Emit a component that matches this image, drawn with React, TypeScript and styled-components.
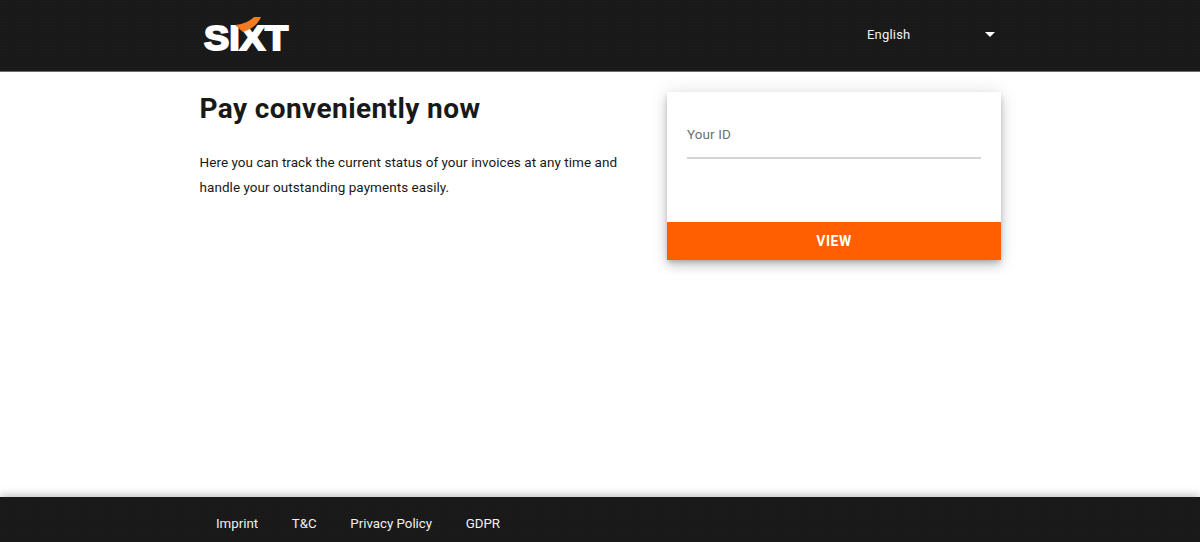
import React from "react";
import styled, { createGlobalStyle } from "styled-components";

const Global = createGlobalStyle`
  html, body { margin: 0; padding: 0; height: 100%; background: #fff; }
  body { font-family: Roboto, "Liberation Sans", sans-serif; color: #191919; }
  #root { height: 100%; }
`;

const Page = styled.div`
  height: 542px;
  display: flex;
  flex-direction: column;
  overflow: hidden;
`;

const Header = styled.header`
  height: 71px;
  flex: none;
  background-color: #191919;
  background-image: radial-gradient(rgba(255, 255, 255, 0.018) 0.6px, transparent 0.8px);
  background-size: 3px 3px;
  border-bottom: 1px solid #6b6b6b;
`;

const HeaderInner = styled.div`
  width: 800px;
  height: 100%;
  margin: 0 auto;
  display: flex;
  align-items: center;
  justify-content: space-between;
`;

const LogoSvg = styled.svg`
  display: block;
  width: 90px;
  height: 40px;
  margin: 0 0 3px 2px;
  overflow: visible;
`;

const LogoWord = styled.text`
  font-family: "Liberation Sans", sans-serif;
  font-weight: 700;
  font-size: 35px;
  fill: #fff;
  stroke: #fff;
  stroke-width: 2px;
`;

const LanguageSelect = styled.div`
  width: 128px;
  margin: 0 5px 2px 0;
  display: flex;
  align-items: center;
  justify-content: space-between;
  color: #f2f2f2;
  font-size: 13px;
  letter-spacing: 0.2px;
  line-height: 16px;
`;

const Caret = styled.span`
  width: 0;
  height: 0;
  border-left: 5px solid transparent;
  border-right: 5px solid transparent;
  border-top: 5px solid #fff;
`;

const Main = styled.main`
  flex: 1;
  width: 800px;
  margin: 0 auto;
  display: flex;
  justify-content: space-between;
  align-items: flex-start;
`;

const Intro = styled.section`
  width: 430px;
  margin-left: -0.5px;
`;

const Title = styled.h1`
  margin: 20px 0 0;
  font-size: 28px;
  line-height: 34px;
  font-weight: 700;
  letter-spacing: 0.4px;
  color: #191919;
`;

const Lead = styled.p`
  margin: 24px 0 0;
  font-size: 13.5px;
  line-height: 25px;
  letter-spacing: 0.05px;
  color: #191919;
`;

const Card = styled.form`
  width: 334px;
  height: 168px;
  margin: 20px -1px 0 0;
  display: flex;
  flex-direction: column;
  background: #fff;
  box-shadow: 0 3px 5px -1px rgba(0, 0, 0, 0.2), 0 6px 10px 0 rgba(0, 0, 0, 0.14), 0 1px 18px 0 rgba(0, 0, 0, 0.12);
`;

const Field = styled.div`
  flex: 1;
  padding: 0 20px;
`;

const FieldLabel = styled.div`
  height: 67px;
  box-sizing: border-box;
  padding-top: 34px;
  font-size: 13.5px;
  line-height: 17px;
  letter-spacing: 0.1px;
  color: #707070;
  border-bottom: 2px solid #d4d4d4;
`;

const ViewButton = styled.button`
  height: 38px;
  flex: none;
  border: 0;
  padding: 0;
  background: #ff5f00;
  color: #fff;
  font-family: inherit;
  font-size: 14px;
  font-weight: 700;
  letter-spacing: 0.5px;
`;

const Footer = styled.footer`
  height: 45px;
  flex: none;
  background-color: #191919;
  background-image: radial-gradient(rgba(255, 255, 255, 0.016) 0.6px, transparent 0.8px);
  background-size: 3px 3px;
  box-shadow: 0 -2px 8px rgba(0, 0, 0, 0.25);
`;

const FooterNav = styled.nav`
  width: 800px;
  height: 100%;
  margin: 0 auto;
  padding: 8px 0 0 16px;
  box-sizing: border-box;
  display: flex;
  align-items: center;
  gap: 33.6px;
`;

const FooterLink = styled.a`
  color: #f0f0f0;
  font-size: 13.3px;
  line-height: 17px;
`;

export default function App() {
  return (
    <Page>
      <Global />
      <Header>
        <HeaderInner>
          <LogoSvg viewBox="0 0 90 40" role="img" aria-label="SIXT">
            <LogoWord x="2" y="36" textLength="84" lengthAdjust="spacingAndGlyphs">SIXT</LogoWord>
            <path d="M33 11 C42 10 48 7 52 3 L59 3 C56 10 50 15 41 18 Z" fill="#f47b20" />
          </LogoSvg>
          <LanguageSelect>
            <span>English</span>
            <Caret />
          </LanguageSelect>
        </HeaderInner>
      </Header>
      <Main>
        <Intro>
          <Title>Pay conveniently now</Title>
          <Lead>
            Here you can track the current status of your invoices at any time and handle your outstanding payments easily.
          </Lead>
        </Intro>
        <Card>
          <Field>
            <FieldLabel>Your ID</FieldLabel>
          </Field>
          <ViewButton type="button">VIEW</ViewButton>
        </Card>
      </Main>
      <Footer>
        <FooterNav>
          <FooterLink>Imprint</FooterLink>
          <FooterLink>T&amp;C</FooterLink>
          <FooterLink>Privacy Policy</FooterLink>
          <FooterLink>GDPR</FooterLink>
        </FooterNav>
      </Footer>
    </Page>
  );
}
